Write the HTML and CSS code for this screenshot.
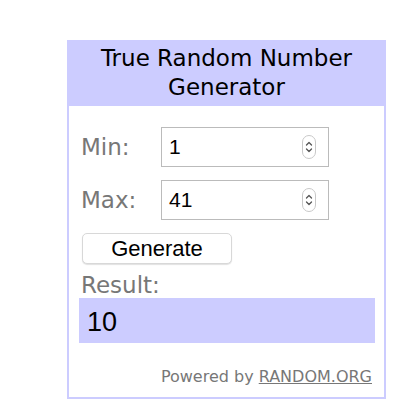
FILE: index.html
```html
<!DOCTYPE html>
<html lang="en">
<head>
    <meta charset="UTF-8">
    <meta name="viewport" content="width=device-width, initial-scale=1.0">
    <title>True Random Number Generator</title>
    <link rel="stylesheet" href="styles.css">
</head>
<body>
    <div class="widget">
        <div class="widget-title">True Random Number Generator</div>
        <div class="widget-body">
            <div class="field-row">
                <label class="field-label">Min:</label>
                <div class="number-input">
                    <span class="number-value">1</span>
                    <svg class="spinner" width="14" height="24" viewBox="0 0 14 24">
                        <rect x="0.5" y="0.5" width="13" height="23" rx="6.5" fill="#fff" stroke="#c8c8c8"/>
                        <path d="M4.5 10 L7 7.5 L9.5 10" fill="none" stroke="#555" stroke-width="1.3" stroke-linecap="round" stroke-linejoin="round"/>
                        <path d="M4.5 14 L7 16.5 L9.5 14" fill="none" stroke="#555" stroke-width="1.3" stroke-linecap="round" stroke-linejoin="round"/>
                    </svg>
                </div>
            </div>
            <div class="field-row">
                <label class="field-label">Max:</label>
                <div class="number-input">
                    <span class="number-value">41</span>
                    <svg class="spinner" width="14" height="24" viewBox="0 0 14 24">
                        <rect x="0.5" y="0.5" width="13" height="23" rx="6.5" fill="#fff" stroke="#c8c8c8"/>
                        <path d="M4.5 10 L7 7.5 L9.5 10" fill="none" stroke="#555" stroke-width="1.3" stroke-linecap="round" stroke-linejoin="round"/>
                        <path d="M4.5 14 L7 16.5 L9.5 14" fill="none" stroke="#555" stroke-width="1.3" stroke-linecap="round" stroke-linejoin="round"/>
                    </svg>
                </div>
            </div>
            <button class="generate-btn">Generate</button>
            <div class="result-label">Result:</div>
            <div class="result-box">10</div>
            <div class="powered">Powered by <a href="#">RANDOM.ORG</a></div>
        </div>
    </div>
</body>
</html>
```

FILE: styles.css
```css
body {
    margin: 0;
    background-color: #fff;
    font-family: "DejaVu Sans", Verdana, sans-serif;
}
.widget {
    width: 315px;
    margin: 40px 0 0 67px;
    border: 2px solid #ccccff;
    border-top: none;
}
.widget-title {
    background-color: #ccccff;
    margin: 0 -2px;
    padding: 4px 10px;
    font-size: 23px;
    line-height: 29px;
    text-align: center;
    color: #000;
}
.widget-body {
    display: flex;
    flex-direction: column;
    padding: 21px 10px 11px 12px;
}
.field-row {
    display: flex;
    align-items: center;
    margin-bottom: 13px;
}
.field-label {
    width: 80px;
    font-size: 23px;
    color: #777;
}
.number-input {
    display: flex;
    justify-content: space-between;
    align-items: center;
    box-sizing: border-box;
    width: 168px;
    height: 40px;
    padding: 0 12px 0 7px;
    border: 1px solid #bbb;
    font-family: "Liberation Sans", Arial, sans-serif;
    font-size: 21px;
    color: #000;
}
.generate-btn {
    align-self: flex-start;
    width: 150px;
    height: 31px;
    margin-left: 1px;
    background-color: #fff;
    border: 1px solid #d8d8d8;
    border-radius: 5px;
    box-shadow: 0 1px 1px rgba(0, 0, 0, 0.12);
    font-family: "Liberation Sans", Arial, sans-serif;
    font-size: 22px;
    color: #000;
    padding: 0;
}
.result-label {
    margin-top: 8px;
    font-size: 23px;
    color: #777;
}
.result-box {
    box-sizing: border-box;
    width: 296px;
    height: 45px;
    margin-left: -2px;
    padding: 4px 8px 0;
    background-color: #ccccff;
    font-family: "Liberation Sans", Arial, sans-serif;
    font-size: 27px;
    line-height: 41px;
    color: #000;
}
.powered {
    margin-top: 24px;
    margin-right: 2px;
    text-align: right;
    font-size: 16px;
    color: #777;
}
.powered a {
    color: #777;
}
```
